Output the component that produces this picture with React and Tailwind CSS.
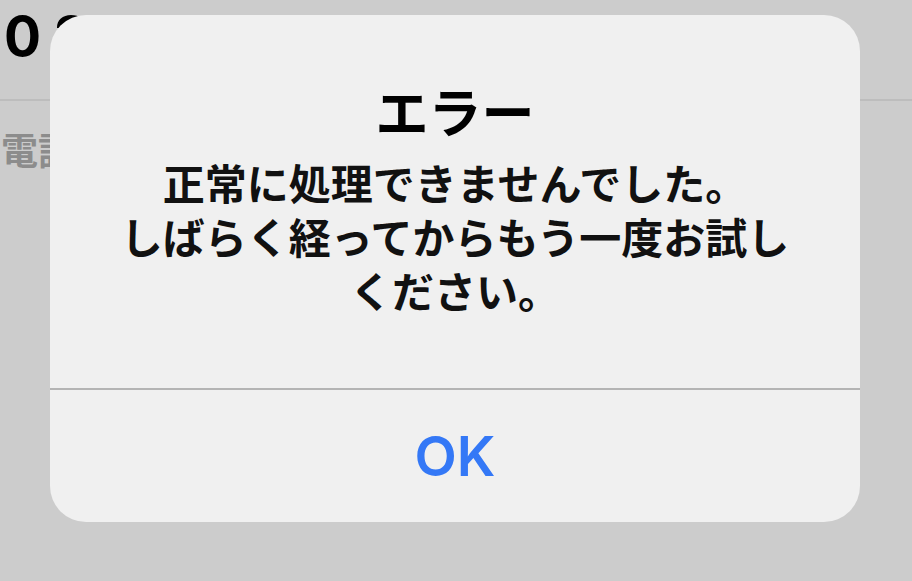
export default function App() {
  const lines = ['正常に処理できませんでした。', 'しばらく経ってからもう一度お試し', 'ください。'];
  return (
    <div className="relative w-[912px] h-[581px] overflow-hidden bg-[#cccccc]" style={{ fontFamily: '"Noto Sans CJK JP", "Noto Sans", sans-serif' }}>
      {/* page behind the alert */}
      <div className="pt-[6px] pl-[4px] text-[55px] leading-[60px] font-bold text-black" style={{ fontFamily: 'Inter, "Noto Sans CJK JP", sans-serif' }}>
        0 2
      </div>
      <div className="mt-[33px] h-[2px] bg-[#bdbdbd]"></div>
      <div className="mt-[26px] pl-[1px] text-[37px] leading-[44px] font-bold text-[#8c8c8c]">電話番号</div>

      {/* alert */}
      <div className="absolute left-[50px] top-[15px] w-[810px] h-[507px] rounded-[36px] bg-[#f0f0f0] flex flex-col">
        <div className="flex flex-col items-center px-[50px] pt-[64px] pb-[71px]">
          <h1 className="text-[53px] leading-[62px] font-bold text-black">エラー</h1>
          <div className="mt-[14px] flex flex-col items-center text-[42px] leading-[54px] font-bold text-[#111]">
            {lines.map((line) => (
              <p key={line}>{line}</p>
            ))}
          </div>
        </div>
        <div className="h-[2px] bg-[#b4b4b4]"></div>
        <button className="flex-1 flex items-center justify-center text-[55px] font-semibold text-[#3478f6]" style={{ fontFamily: 'Inter, "Noto Sans", sans-serif' }}>
          OK
        </button>
      </div>
    </div>
  );
}
